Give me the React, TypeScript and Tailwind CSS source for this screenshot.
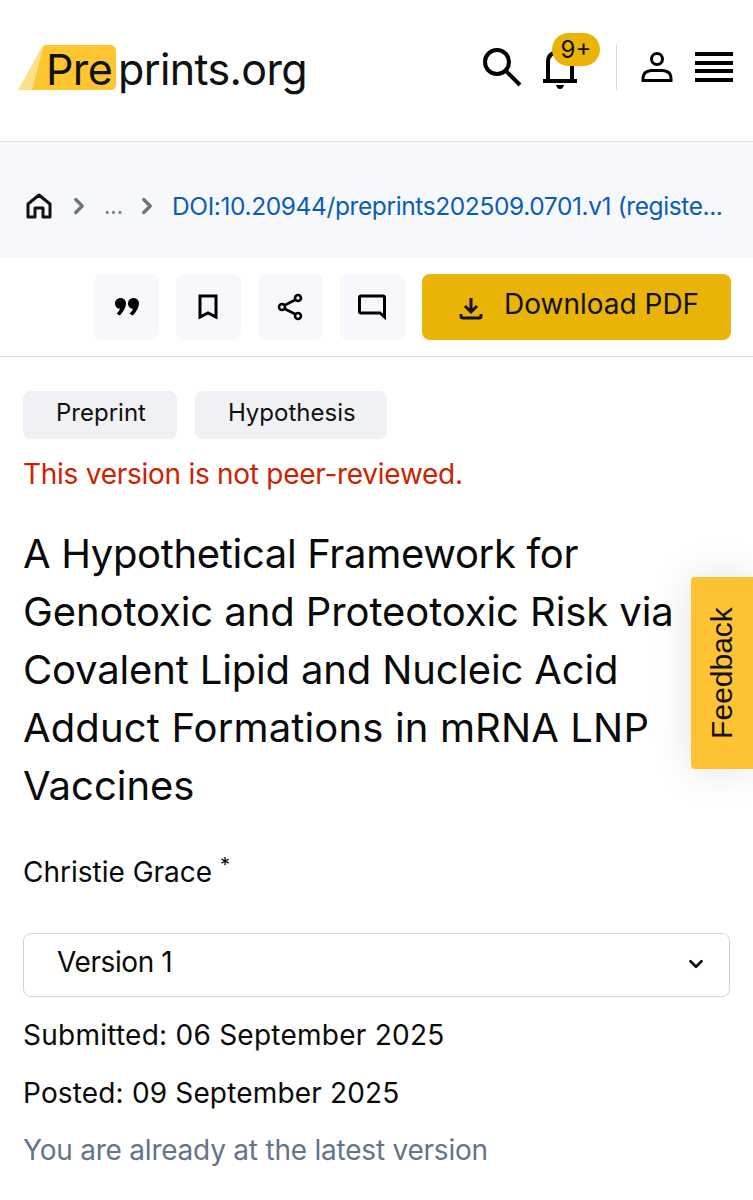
import { ChevronRight, ChevronDown } from 'lucide-react';

const inter = 'font-["Inter","Noto_Sans",sans-serif]';

function Logo() {
  return (
    <div className="relative w-[290px] h-[48px]">
      {/* yellow tab behind the word */}
      <svg className="absolute left-0 top-0" width="100" height="46" viewBox="0 0 100 46">
        <path d="M0 45 L25 0 L30 0 L30 45 Z" fill="#fbe08c" />
        <path d="M14 45 L25 3 Q26 0 30 0 L92 0 Q98 0 98 6 L98 39 Q98 45 92 45 Z" fill="#fdc52f" />
      </svg>
      <span className='absolute left-[28px] top-0 text-[43px] leading-[48px] tracking-[-0.65px] text-[#111] font-["Inter",sans-serif]'>
        Pre<span className="ml-[6px]">prints.org</span>
      </span>
    </div>
  );
}

function Header() {
  return (
    <header className="h-[142px] bg-white border-b border-[#dfe1e5] shadow-[0_1px_2px_rgba(0,0,0,0.08)] flex items-start justify-between pl-[18px] pr-[20px] pt-[45px]">
      <Logo />
      <div className="flex items-center h-[46px] mt-[-1px]">
        {/* search */}
        <svg width="40" height="40" viewBox="0 0 40 40" fill="none" stroke="#000" strokeWidth="4" className="mr-[20px]">
          <circle cx="15" cy="15" r="12" />
          <path d="M24 24 L38 38" />
        </svg>
        {/* bell + badge */}
        <div className="relative w-[36px] h-[46px] mr-[38px]">
          <svg width="36" height="46" viewBox="0 0 36 46" fill="none" stroke="#000" strokeWidth="4" className="absolute left-0 top-[2px]">
            <path d="M6 35 V16 Q6 6 18 6 Q30 6 30 16 V35" />
            <path d="M1 35 H35" />
            <path d="M14 39 H22 Q21 43 18 43 Q15 43 14 39 Z" fill="#000" stroke="none" />
          </svg>
          <span className={`absolute left-[10px] top-[-11px] w-[48px] h-[33px] rounded-full bg-[#eab308] text-[24px] leading-[33px] text-center text-[#111] ${inter}`}>
            9+
          </span>
        </div>
        <div className="w-px h-[46px] bg-[#d9dbdf] mr-[24px]" />
        {/* user */}
        <svg width="32" height="32" viewBox="0 0 32 32" fill="none" stroke="#000" strokeWidth="3" className="mr-[22px]">
          <circle cx="16" cy="8" r="5.5" />
          <path d="M2 29.5 V27 Q2 20.5 10 19.5 H22 Q30 20.5 30 27 V29.5 Z" />
        </svg>
        {/* menu */}
        <svg width="38" height="30" viewBox="0 0 38 30" fill="#000">
          <rect y="0" width="38" height="4" />
          <rect y="9" width="38" height="4" />
          <rect y="17" width="38" height="4" />
          <rect y="26" width="38" height="4" />
        </svg>
      </div>
    </header>
  );
}

function Breadcrumb() {
  return (
    <nav className={`h-[115px] bg-[#f7f8fc] flex items-center pt-[13px] pl-[26px] pr-[30px] ${inter}`}>
      <svg width="26" height="26" viewBox="0 0 26 26" fill="none" stroke="#111" strokeWidth="3" className="shrink-0">
        <path d="M2 24 V11 L13 2 L24 11 V24 H17 V15 H9 V24 Z" strokeLinejoin="round" />
      </svg>
      <ChevronRight className="w-[26px] h-[26px] ml-[14px] shrink-0 text-[#6b7280]" strokeWidth={3} />
      <span className="ml-[12px] text-[22px] text-[#6b7280] shrink-0">...</span>
      <ChevronRight className="w-[26px] h-[26px] ml-[11px] shrink-0 text-[#6b7280]" strokeWidth={3} />
      <span className="ml-[12px] text-[24.5px] leading-[32px] tracking-[-0.39px] text-[#0b5cb8] whitespace-nowrap">
        DOI:10.20944/preprints202509.0701.v1 (registe...
      </span>
    </nav>
  );
}

function ToolButton({ children }: { children: React.ReactNode }) {
  return (
    <button className="w-[65px] h-[66px] rounded-lg bg-[#f7f8fc] flex items-center justify-center">
      {children}
    </button>
  );
}

function Toolbar() {
  return (
    <div className={`h-[100px] bg-white border-b border-[#d9dbdf] flex items-start justify-end gap-[17px] pt-[17px] pr-[22px] ${inter}`}>
      <ToolButton>
        {/* quote mark drawn as two heavy commas */}
        <svg width="24" height="18" viewBox="0 0 24 18" fill="#000">
          <path d="M5.5 0 C8.8 0 11 2.4 11 5.6 C11 9.4 8.4 13.6 4.8 17.6 L1.6 15.8 C3.2 14 4.4 12.4 5.2 10.8 C2.2 10.8 0 8.6 0 5.5 C0 2.4 2.3 0 5.5 0 Z" />
          <path d="M18.5 0 C21.8 0 24 2.4 24 5.6 C24 9.4 21.4 13.6 17.8 17.6 L14.6 15.8 C16.2 14 17.4 12.4 18.2 10.8 C15.2 10.8 13 8.6 13 5.5 C13 2.4 15.3 0 18.5 0 Z" />
        </svg>
      </ToolButton>
      <ToolButton>
        <svg width="20" height="26" viewBox="0 0 20 26" fill="none" stroke="#000" strokeWidth="3" className="mr-[2px]">
          <path d="M2 2 H18 V23 L10 19 L2 23 Z" />
        </svg>
      </ToolButton>
      <ToolButton>
        <svg width="26" height="28" viewBox="0 0 26 28" fill="none" stroke="#000" strokeWidth="2.6" className="mr-[2px]">
          <circle cx="21" cy="5" r="3" />
          <circle cx="5" cy="14" r="3" />
          <circle cx="21" cy="23" r="3" />
          <path d="M8 12 L18 7 M8 16 L18 21" />
        </svg>
      </ToolButton>
      <ToolButton>
        <svg width="28" height="26" viewBox="0 0 28 26" fill="none" stroke="#000" strokeWidth="3" className="mr-[2px]">
          <path d="M3 2 H25 Q26.5 2 26.5 3.5 V23 L22 19 H3 Q1.5 19 1.5 17.5 V3.5 Q1.5 2 3 2 Z" />
        </svg>
      </ToolButton>
      <button className="w-[309px] h-[66px] rounded-lg bg-[#eab308] flex items-center pl-[37px] text-[#111] text-[28px] leading-[60px] pb-[6px]">
        <svg width="24" height="24" viewBox="0 0 24 24" fill="none" stroke="#111" strokeWidth="3" className="mr-[21px] mt-[8px]">
          <path d="M12 2 V15 M6 10 L12 16 L18 10 M2 18 V20 Q2 22 4 22 H20 Q22 22 22 20 V18" />
        </svg>
        Download PDF
      </button>
    </div>
  );
}

function Tag({ label }: { label: string }) {
  return (
    <span className="h-[48px] pl-[33px] pr-[31px] rounded-lg bg-[#f0f1f4] text-[24px] leading-[44px] text-[#111]">{label}</span>
  );
}

function Article() {
  return (
    <main className={`px-[23px] pt-[34px] text-[#0a0a0a] ${inter}`}>
      <div className="flex gap-[18px]">
        <Tag label="Preprint" />
        <Tag label="Hypothesis" />
      </div>
      <p className="mt-[17px] text-[28px] leading-[36px] tracking-[-0.27px] text-[#cc2200]">This version is not peer-reviewed.</p>
      <h1 className="mt-[33px] text-[40px] leading-[58px] font-normal">
        <span className="tracking-[-0.33px]">A Hypothetical Framework for</span><br />
        <span className="tracking-[-0.09px]">Genotoxic and Proteotoxic Risk via</span><br />
        <span className="tracking-[-0.16px]">Covalent Lipid and Nucleic Acid</span><br />
        <span className="tracking-[0.14px]">Adduct Formations in mRNA LNP</span><br />
        Vaccines
      </h1>
      <p className="mt-[38px] text-[28px] leading-[38px]">
        Christie Grace <sup className="text-[20px]">*</sup>
      </p>
      <div className="mt-[42px] h-[64px] rounded-lg border border-[#d1d3d8] flex items-center justify-between pl-[33px] pr-[22px] text-[28px] tracking-[-0.4px]">
        <span className="mb-[6px]">Version 1</span>
        <ChevronDown className="w-[22px] h-[22px] mb-[2px] text-[#111]" strokeWidth={3} />
      </div>
      <p className="mt-[18px] text-[28px] leading-[40px] tracking-[0.25px]">Submitted: 06 September 2025</p>
      <p className="mt-[18px] text-[28px] leading-[40px] tracking-[0.16px]">Posted: 09 September 2025</p>
      <p className="mt-[17px] text-[28px] leading-[40px] tracking-[-0.22px] text-[#64748b]">You are already at the latest version</p>
    </main>
  );
}

export default function App() {
  return (
    <div className="relative w-[753px] h-[1200px] overflow-hidden bg-white">
      <Header />
      <Breadcrumb />
      <Toolbar />
      <Article />
      {/* floating feedback tab */}
      <div className="absolute right-0 top-[577px] w-[62px] h-[192px] rounded-l bg-[#fec235] shadow-[0_0_40px_rgba(0,0,0,0.12)] flex items-center justify-center">
        <span className='-rotate-90 text-[30px] leading-none whitespace-nowrap text-[#111] font-["Liberation_Sans",sans-serif]'>Feedback</span>
      </div>
    </div>
  );
}
